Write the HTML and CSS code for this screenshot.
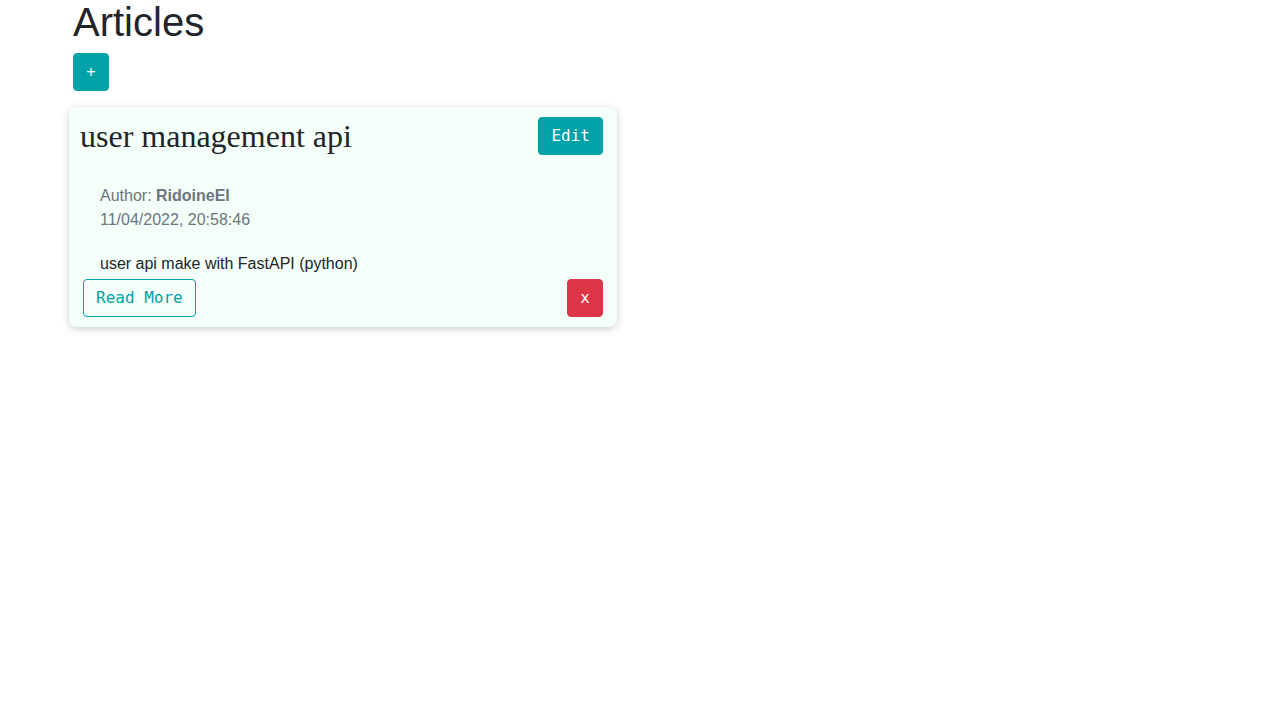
FILE: index.html
```html
<!DOCTYPE html>
<html>
<head>
<meta charset="utf-8">
<link rel="stylesheet" href="styles.css">
</head>
<body>
<main class="container">
  <h1 class="page-title">Articles</h1>
  <button class="btn btn-teal btn-add">+</button>
  <article class="card">
    <header class="card-head">
      <h2 class="card-title">user management api</h2>
      <button class="btn btn-teal btn-mono">Edit</button>
    </header>
    <div class="meta">
      <div>Author: <b>RidoineEl</b></div>
      <div>11/04/2022, 20:58:46</div>
    </div>
    <p class="desc">user api make with FastAPI (python)</p>
    <footer class="card-foot">
      <button class="btn btn-outline btn-mono">Read More</button>
      <button class="btn btn-red btn-mono">x</button>
    </footer>
  </article>
</main>
</body>
</html>
```

FILE: styles.css
```css
* { box-sizing: border-box; }
html, body { min-height: 100%; }
body {
  margin: 0;
  font-family: "Liberation Sans", Arial, sans-serif;
  font-size: 16px;
  line-height: 1.5;
  color: #212529;
  background: #fff;
}
.container {
  padding: 0 0 40px 73px;
  display: flex;
  flex-direction: column;
  align-items: flex-start;
}
.page-title {
  margin: 0;
  font-size: 40px;
  line-height: 44px;
  font-weight: 400;
  color: #212529;
}
.btn {
  font-size: 16px;
  line-height: 24px;
  padding: 6px 12px;
  border: 1px solid transparent;
  border-radius: 4px;
  cursor: pointer;
}
.btn-mono { font-family: "DejaVu Sans Mono", monospace; }
.btn-teal { background: #00a2a8; border-color: #00a2a8; color: #fff; }
.btn-outline { background: transparent; border-color: #00a2a8; color: #00a2a8; }
.btn-red { background: #dc3545; border-color: #dc3545; color: #fff; width: 36px; padding: 6px 0; }
.btn-add {
  margin-top: 9px;
  font-family: "Liberation Sans", Arial, sans-serif;
  width: 36px;
  padding: 6px 0;
}
.card {
  margin-top: 16px;
  margin-left: -4px;
  width: 548px;
  background: #f5fffa;
  border-radius: 8px;
  box-shadow: 0 2px 8px rgba(0, 0, 0, 0.2);
  padding: 10px 14px 10px 11px;
}
.card-head {
  display: flex;
  justify-content: space-between;
  align-items: center;
}
.card-title {
  margin: 0;
  font-family: "Liberation Serif", "Times New Roman", serif;
  font-size: 32px;
  line-height: 38px;
  font-weight: 400;
  color: #212529;
}
.meta {
  margin-top: 29px;
  padding-left: 20px;
  color: #6c757d;
}
.meta b { font-weight: 700; }
.desc {
  margin: 20px 0 0;
  padding-left: 20px;
}
.card-foot {
  margin-top: 3px;
  margin-left: 3px;
  display: flex;
  justify-content: space-between;
}
```
